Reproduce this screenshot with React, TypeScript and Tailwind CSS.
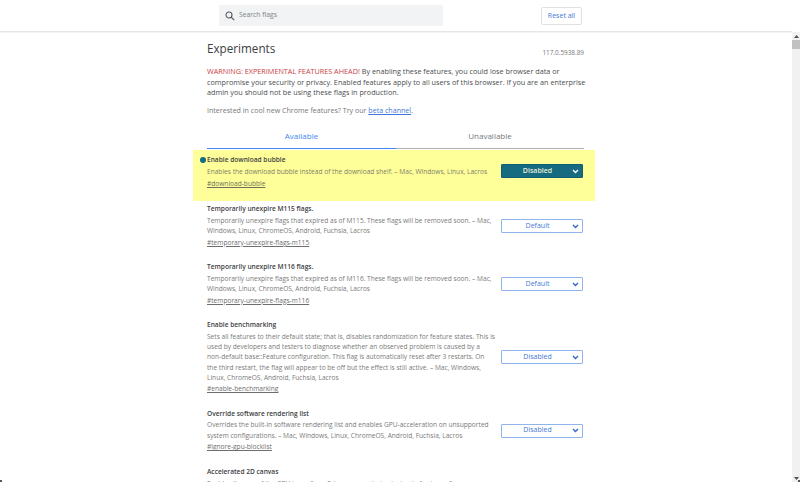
import React from "react";

const F = "font-['Open_Sans','Liberation_Sans',sans-serif]";

function Chevron({ white }: { white?: boolean }) {
  return (
    <svg width="7" height="5" viewBox="0 0 7 5" className="shrink-0">
      <path d="M1 1l2.5 2.5L6 1" fill="none" stroke={white ? "#ffffff" : "#2f66c4"} strokeWidth="1.3" />
    </svg>
  );
}

function Sel({ label, active }: { label: string; active?: boolean }) {
  return (
    <div
      className={
        "flex h-[14px] w-[82px] shrink-0 items-center rounded-[1px] border pl-[6px] pr-[3px] text-[7px] " +
        (active
          ? "border-[#0f5c73] bg-[#176b80] text-[#e6f0d8] font-semibold"
          : "border-[#8fb4ee] bg-white text-[#3f78d8] font-medium")
      }
    >
      <span className="flex-1 pr-[5px] text-center">{label}</span>
      <Chevron white={active} />
    </div>
  );
}

function Row({
  title,
  lines,
  link,
  value,
  mt,
}: {
  title: string;
  lines: string[];
  link: string;
  value: string;
  mt: string;
}) {
  return (
    <div className={"flex w-[376px] items-center justify-between " + mt}>
      <div className="text-[6.6px] leading-[10.2px] whitespace-nowrap">
        <div className="font-semibold text-[#3c4043]">{title}</div>
        <div className="mt-[1.5px] text-[#7a7a7a]">
          {lines.map((l) => (
            <div key={l}>{l}</div>
          ))}
        </div>
        <div className="mt-[1.5px] text-[#6e6e6e] underline">{link}</div>
      </div>
      <Sel label={value} />
    </div>
  );
}

export default function App() {
  return (
    <div className={"relative flex h-[482px] w-[800px] flex-col overflow-hidden bg-white " + F}>
      <header className="flex h-[32px] w-[792px] shrink-0 items-start border-b border-[#e6e6e6] shadow-[0_1px_1px_rgba(0,0,0,0.04)] pl-[219px]">
        <div className="mt-[5px] flex h-[21px] w-[224px] items-center rounded-[1px] bg-[#f1f3f4] pl-[6px]">
          <svg width="10" height="10" viewBox="0 0 12 12" className="shrink-0">
            <circle cx="4.8" cy="4.8" r="3.6" fill="none" stroke="#55585c" strokeWidth="1.3" />
            <path d="M7.4 7.4L11 11" stroke="#55585c" strokeWidth="1.5" />
          </svg>
          <span className="ml-[4px] text-[6.8px] text-[#808488]">Search flags</span>
        </div>
        <div className="ml-[98px] mt-[7px] flex h-[18px] w-[41px] items-center justify-center rounded-[2px] border border-[#e0e0e0] text-[7px] font-medium text-[#3f78d8]">
          Reset all
        </div>
      </header>

      <div className="flex min-h-0 flex-1">
        <main className="min-w-0 flex-1 pl-[207px]">
          <div className="w-[377px]">
            <div className="mt-[7px] flex items-end justify-between">
              <h1 className="text-[11.7px] leading-[18px] text-[#3c4043]">Experiments</h1>
              <span className="-mb-[1px] text-[6.4px] leading-[10px] text-[#75787b]">117.0.5938.89</span>
            </div>
            <p className="mt-[9px] text-[7.25px] leading-[10.6px] whitespace-nowrap text-[#4a4d50]">
              <span className="text-[#c9403f]">WARNING: EXPERIMENTAL FEATURES AHEAD!</span> By enabling these features, you could lose browser data or
              <br />
              compromise your security or privacy. Enabled features apply to all users of this browser. If you are an enterprise
              <br />
              admin you should not be using these flags in production.
            </p>
            <p className="mt-[7.5px] text-[7.1px] leading-[10.6px] text-[#75787b]">
              Interested in cool new Chrome features? Try our{" "}
              <span className="text-[#3f78d8] underline">beta channel</span>.
            </p>
            <div className="mt-[14.5px] flex text-[8px] leading-[12px]">
              <div className="w-[189px] border-b-[1.5px] border-[#4285f4] pb-[6px] text-center text-[#4285f4]">Available</div>
              <div className="flex-1 border-b-[1.5px] border-[#b0b0b0] pb-[6px] text-center text-[#75787b]">Unavailable</div>
            </div>
          </div>

          <div className="mt-[1px] -ml-[14px] flex h-[51px] w-[402px] items-start justify-between bg-[#ffff99] pl-[14px] pr-[12px] pt-[5px]">
            <div className="relative text-[6.6px] leading-[10.4px] whitespace-nowrap">
              <span className="absolute -left-[7px] top-[2px] size-[5.5px] rounded-full bg-[#176b80]" />
              <div className="font-semibold text-[#3c4043]">Enable download bubble</div>
              <div className="mt-[1.5px] text-[#80806a]">Enables the download bubble instead of the download shelf. – Mac, Windows, Linux, Lacros</div>
              <div className="mt-[1.5px] text-[#6e6e5c] underline">#download-bubble</div>
            </div>
            <div className="mt-[9px] flex">
              <Sel label="Disabled" active />
            </div>
          </div>

          <Row
            mt="mt-[3px]"
            title="Temporarily unexpire M115 flags."
            lines={[
              "Temporarily unexpire flags that expired as of M115. These flags will be removed soon. – Mac,",
              "Windows, Linux, ChromeOS, Android, Fuchsia, Lacros",
            ]}
            link="#temporary-unexpire-flags-m115"
            value="Default"
          />
          <Row
            mt="mt-[14px]"
            title="Temporarily unexpire M116 flags."
            lines={[
              "Temporarily unexpire flags that expired as of M116. These flags will be removed soon. – Mac,",
              "Windows, Linux, ChromeOS, Android, Fuchsia, Lacros",
            ]}
            link="#temporary-unexpire-flags-m116"
            value="Default"
          />
          <Row
            mt="mt-[14.2px]"
            title="Enable benchmarking"
            lines={[
              "Sets all features to their default state; that is, disables randomization for feature states. This is",
              "used by developers and testers to diagnose whether an observed problem is caused by a",
              "non-default base::Feature configuration. This flag is automatically reset after 3 restarts. On",
              "the third restart, the flag will appear to be off but the effect is still active. – Mac, Windows,",
              "Linux, ChromeOS, Android, Fuchsia, Lacros",
            ]}
            link="#enable-benchmarking"
            value="Disabled"
          />
          <Row
            mt="mt-[14px]"
            title="Override software rendering list"
            lines={[
              "Overrides the built-in software rendering list and enables GPU-acceleration on unsupported",
              "system configurations. – Mac, Windows, Linux, ChromeOS, Android, Fuchsia, Lacros",
            ]}
            link="#ignore-gpu-blocklist"
            value="Disabled"
          />
          <Row
            mt="mt-[14.5px]"
            title="Accelerated 2D canvas"
            lines={[
              "Enables the use of the GPU to perform 2d canvas rendering instead of using software",
              "rendering. – Mac, Windows, Linux, ChromeOS, Android, Fuchsia, Lacros",
            ]}
            link="#disable-accelerated-2d-canvas"
            value="Enabled"
          />
        </main>

        <aside className="flex w-[8px] shrink-0 flex-col items-center justify-between bg-[#f1f1f1] pb-[2px] pt-[2px]">
          <div className="flex w-full flex-col items-center">
            <svg width="5" height="3" viewBox="0 0 5 3" className="mt-[1px]">
              <path d="M2.5 0L5 3H0z" fill="#505050" />
            </svg>
            <div className="mt-[2px] h-[9px] w-full bg-[#c1c1c1]" />
          </div>
          <svg width="5" height="3" viewBox="0 0 5 3">
            <path d="M2.5 3L5 0H0z" fill="#505050" />
          </svg>
        </aside>
      </div>

      <span className="absolute bottom-0 left-0 size-[2px] bg-[#555]" />
      <span className="absolute bottom-0 right-0 size-[2px] bg-[#555]" />
    </div>
  );
}
